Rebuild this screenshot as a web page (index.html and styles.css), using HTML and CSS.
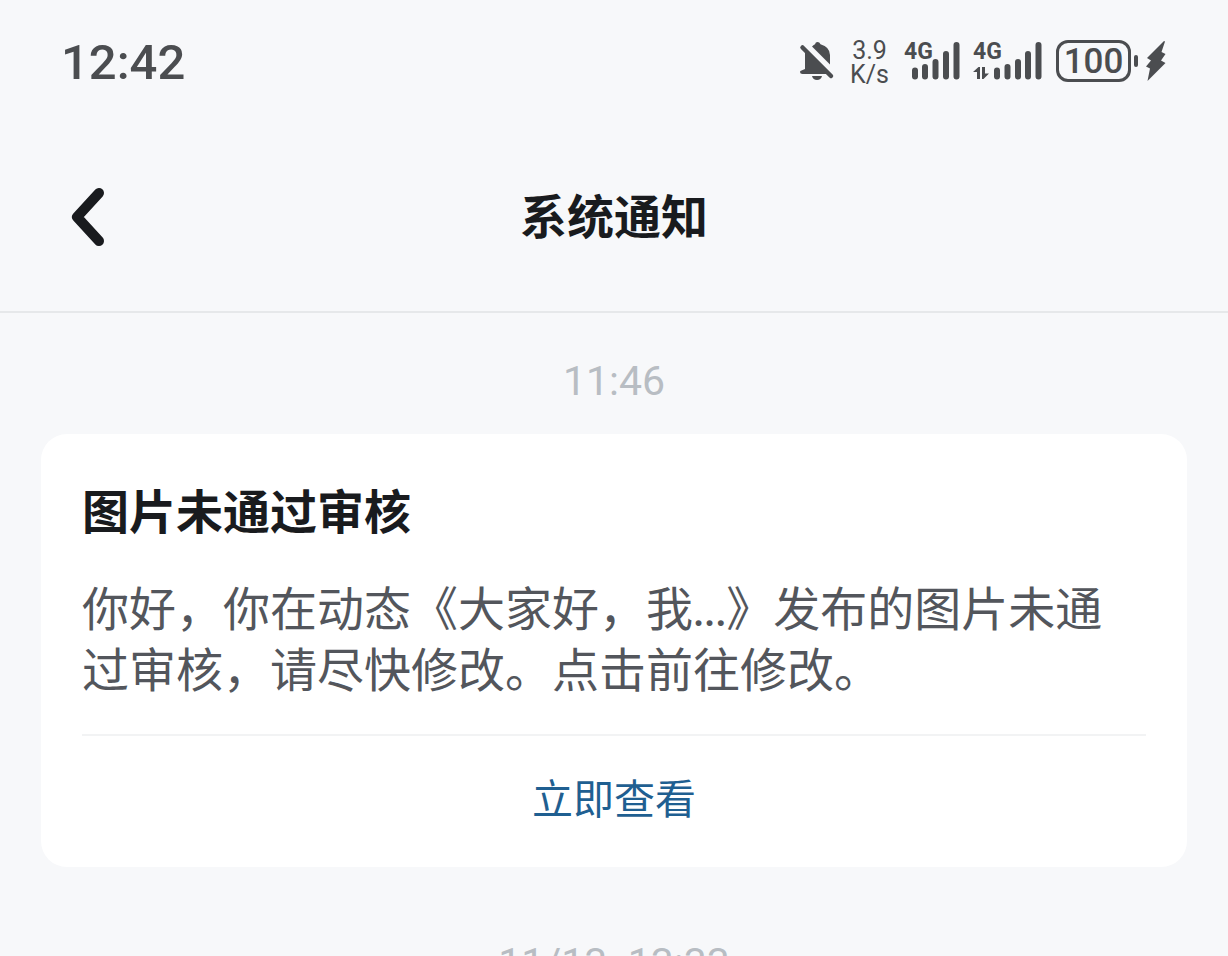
FILE: index.html
```
<!DOCTYPE html>
<html lang="zh-CN">
<head>
<meta charset="utf-8" />
<meta name="viewport" content="width=device-width,initial-scale=1" />
<title>系统通知</title>
<link rel="stylesheet" href="styles.css">
</head>
<body>

<!-- ===== Status bar ===== -->
<div class="status">
  <time class="clock">12:42</time>
  <div class="indicators">
    <svg class="bell" width="36" height="40" viewBox="0 0 36 40" aria-label="静音">
      <path d="M13 5.500Q15 3.500 16 3.200Q16.500 1 18.500 1T21.500 3.200Q31 6 31 14V23.500Z"/>
      <path d="M6 10.500L29 33H3.500Q1 33 1 31Q1 29.800 2.500 29.500L6 28Z"/>
      <path d="M3.500 6.500L32 35" fill="none" stroke="currentColor" stroke-width="4.500" stroke-linecap="round"/>
      <path d="M13 35H23Q22 39 18 39T13 35Z"/>
    </svg>
    <div class="speed"><span>3.9</span><span>K/s</span></div>
    <svg class="signal" width="56" height="42" viewBox="0 0 56 42" aria-label="4G">
      <text x="0" y="19">4G</text>
      <path d="M11 30.500V36.500M21 27V36.500M31.500 22V36.500M42 14V36.500M52.500 5V36.500"/>
    </svg>
    <svg class="signal" width="70" height="42" viewBox="0 0 70 42" aria-label="4G">
      <text x="0" y="19">4G</text>
      <path d="M24 30.500V36.500M34.500 27V36.500M45 22V36.500M55 14V36.500M65.500 5V36.500"/>
      <path class="arrows" d="M0 32L5.500 27H7V39H4V32ZM9 27H12V33.500H16L10.500 39H9Z"/>
    </svg>
    <div class="battery">
      <span class="level">100</span>
      <span class="nub"></span>
      <svg width="22" height="44" viewBox="0 0 22 44" aria-label="充电中">
        <path d="M19 2L2 19L6 21.500L1 27.500L5 29.500L2.500 42L20.500 24L16 21.500L20.500 15L16.500 13L20 2.500Z"/>
      </svg>
    </div>
  </div>
</div>

<!-- ===== Title bar ===== -->
<header class="titlebar">
  <button class="back" type="button" aria-label="返回">
    <svg width="40" height="60" viewBox="0 0 40 60">
      <path d="M32 6L10 30L32 54"/>
    </svg>
  </button>
  <h1>系统通知</h1>
</header>

<!-- ===== Messages ===== -->
<main class="messages">
  <time class="stamp">11:46</time>
  <article class="card">
    <h2>图片未通过审核</h2>
    <p>你好，你在动态《大家好，我...》发布的图片未通过审核，请尽快修改。点击前往修改。</p>
    <a class="action" href="#">立即查看</a>
  </article>
  <time class="stamp">11/13&nbsp; 13:33</time>
</main>

</body>
</html>
```
FILE: styles.css
```
/* ===== Vars & base ===== */
:root{
  --bg:#f7f8fa;
  --ink:#191b1e;
  --body:#53565c;
  --status:#4b4d50;
  --muted:#b8bdc3;
  --link:#1f5f91;
}
*{box-sizing:border-box}
html,body{margin:0;height:100%}
body{
  display:flex; flex-direction:column; overflow:hidden;
  background:var(--bg); color:var(--ink);
  font:400 47px/61px Lato, "Noto Sans CJK SC", sans-serif;
}
h1,h2,p{margin:0}
svg{display:block; flex:none}

/* ===== Status bar ===== */
.status{
  display:flex; align-items:center; justify-content:space-between;
  flex:none; height:122px; padding:0 61px;
  color:var(--status); font-family:Roboto, sans-serif;
}
.clock{padding-top:2px; font-size:49px; font-weight:500}
.indicators{display:flex; align-items:center; gap:13px}
.indicators svg{fill:currentColor}
.speed{
  display:flex; flex-direction:column; align-items:center;
  margin:0 2px; padding-top:4px;
  font-size:25px; line-height:24px;
}
.signal text{font-size:23px; font-weight:700}
.signal path{stroke:currentColor; stroke-width:6; stroke-linecap:round}
.signal .arrows{stroke:none}
.battery{display:flex; align-items:center; gap:3px}
.level{
  display:flex; align-items:center; justify-content:center;
  width:75px; height:42px; padding-top:2px;
  border:3px solid currentColor; border-radius:12px;
  font-size:35px; font-weight:500; line-height:36px;
}
.nub{width:4px; height:12px; border-radius:2px; background:currentColor}
.battery svg{margin-left:4px}

/* ===== Title bar ===== */
.titlebar{
  display:grid; grid-template-columns:1fr auto 1fr; align-items:center;
  flex:none; height:191px; padding:0 67px;
  border-bottom:2px solid #e6e8ea;
}
.titlebar h1{font-size:47px; font-weight:700}
.back{justify-self:start; padding:0; border:0; background:none; color:inherit; cursor:pointer}
.back path{fill:none; stroke:currentColor; stroke-width:10; stroke-linecap:round; stroke-linejoin:round}

/* ===== Messages ===== */
.messages{display:flex; flex-direction:column; padding:0 41px}
.stamp{
  padding:38px 0 22px;
  color:var(--muted); font-family:Roboto, sans-serif; font-size:41px; text-align:center;
}
.card{
  display:flex; flex-direction:column;
  margin-bottom:28px; padding:47px 41px 0;
  border-radius:26px; background:#fff;
}
.card h2{font-size:47px; font-weight:700}
.card p{margin:36px 0 34px; color:var(--body)}
.action{
  padding:32px 0 38px; border-top:2px solid #f2f3f4;
  color:var(--link); font-size:41px; text-align:center; text-decoration:none;
}
```
